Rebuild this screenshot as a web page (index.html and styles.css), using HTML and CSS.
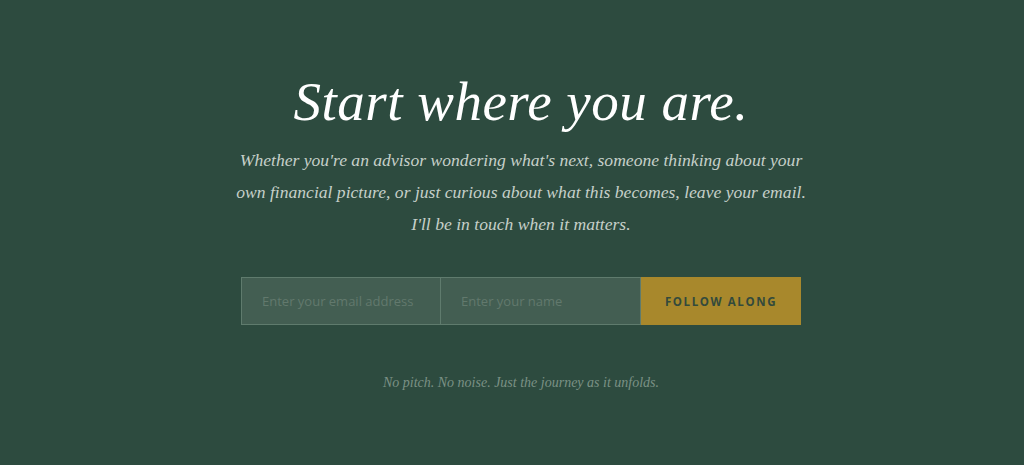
FILE: index.html
```html
<!DOCTYPE html>
<html>
<head>
    <title>Start where you are</title>
    <link rel="stylesheet" href="styles.css">
</head>
<body>
    <section class="signup">
        <h1>Start where you are.</h1>
        <p class="lead">Whether you're an advisor wondering what's next, someone thinking about your own financial picture, or just curious about what this becomes, leave your email. I'll be in touch when it matters.</p>

        <form class="signup-form" onsubmit="return false;">
            <input type="email" placeholder="Enter your email address">
            <input type="text" placeholder="Enter your name">
            <button type="submit">Follow Along</button>
        </form>

        <p class="note">No pitch. No noise. Just the journey as it unfolds.</p>
    </section>
</body>
</html>
```

FILE: styles.css
```css
html, body {
    margin: 0;
    padding: 0;
    background-color: #2d4b3f;
}
.signup {
    display: flex;
    flex-direction: column;
    align-items: center;
    padding: 67px 0 0 18px;
    height: 465px;
    box-sizing: border-box;
}
h1 {
    margin: 0;
    font-family: "Liberation Serif", serif;
    font-style: italic;
    font-weight: normal;
    font-size: 55px;
    line-height: 70px;
    color: #ffffff;
    letter-spacing: 0.5px;
}
.lead {
    margin: 7px 0 0;
    width: 580px;
    text-align: center;
    font-family: "Liberation Serif", serif;
    font-style: italic;
    font-size: 17.6px;
    line-height: 32px;
    color: #c6d0c9;
}
.signup-form {
    display: flex;
    margin-top: 37px;
    width: 560px;
    height: 48px;
}
.signup-form input {
    width: 200px;
    box-sizing: border-box;
    padding: 0 20px;
    border: 1px solid #5f7b6d;
    background: #435e52;
    color: #dfe6e1;
    font-family: "Open Sans", sans-serif;
    font-size: 13px;
    outline: none;
}
.signup-form input + input {
    border-left: none;
}
.signup-form input::placeholder {
    color: #62796d;
}
.signup-form button {
    flex: 1;
    border: 1px solid #a8882c;
    background: #a8882c;
    color: #334a3c;
    font-family: "Open Sans", sans-serif;
    font-weight: 700;
    font-size: 11.5px;
    letter-spacing: 1.6px;
    text-transform: uppercase;
    cursor: pointer;
}
.note {
    margin: 50px 0 0;
    font-family: "Liberation Serif", serif;
    font-style: italic;
    font-size: 14px;
    color: #7b9185;
}
```
